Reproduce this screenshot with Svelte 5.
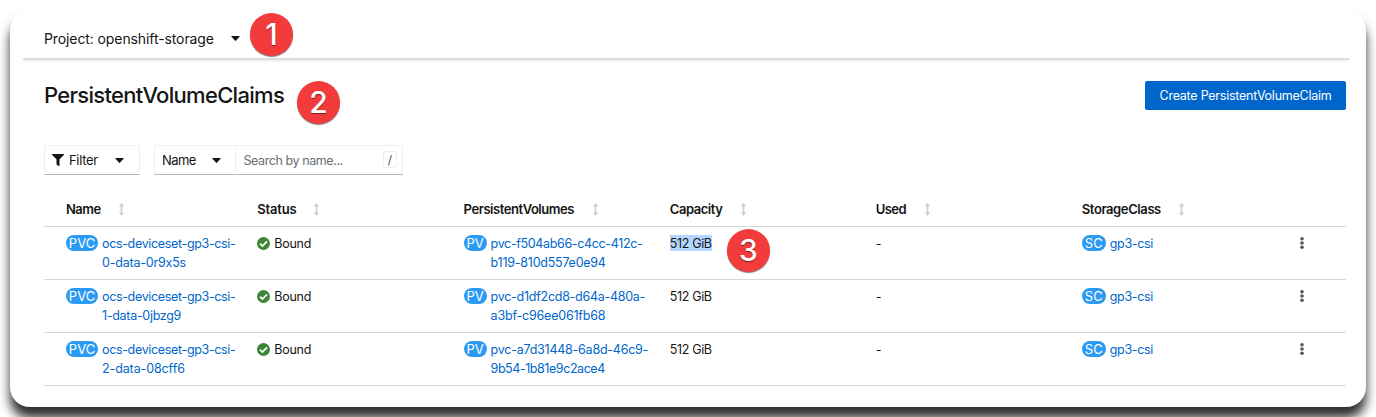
<script>
  const columns = [
    { label: 'Name', gap: 17.5, spacing: -0.55 },
    { label: 'Status', gap: 17, spacing: -0.2 },
    { label: 'PersistentVolumes', gap: 18, spacing: -0.44 },
    { label: 'Capacity', gap: 17.5, spacing: -0.45 },
    { label: 'Used', gap: 18, spacing: -0.6 },
    { label: 'StorageClass', gap: 17, spacing: -0.4 },
  ];
  const rows = [
    {
      name: [['ocs-deviceset-gp3-csi-', -0.34], ['0-data-0r9x5s', -0.2]],
      pv: [['pvc-f504ab66-c4cc-412c-', -0.35], ['b119-810d557e0e94', -0.24]],
      selected: true,
    },
    {
      name: [['ocs-deviceset-gp3-csi-', -0.34], ['1-data-0jbzg9', -0.3]],
      pv: [['pvc-d1df2cd8-d64a-480a-', -0.27], ['a3bf-c96ee061fb68', -0.2]],
    },
    {
      name: [['ocs-deviceset-gp3-csi-', -0.34], ['2-data-08cff6', -0.11]],
      pv: [['pvc-a7d31448-6a8d-46c9-', -0.24], ['9b54-1b81e9c2ace4', -0.44]],
    },
  ];
</script>

{#snippet caret()}
  <svg class="caret" width="9" height="5" viewBox="0 0 9 5"><path d="M.8 0h7.4q.8.1.3.8L5.1 4.6q-.6.6-1.2 0L.5.8Q0 .1.8 0z" fill="#151515" /></svg>
{/snippet}

{#snippet link(lines)}
  <span class="link">{#each lines as [text, spacing]}<span style="letter-spacing: {spacing}px">{text}</span>{/each}</span>
{/snippet}

<div class="page">
  <main class="card">
    <header class="project">
      <span>Project: openshift-storage</span>
      {@render caret()}
    </header>
    <section class="content">
      <div class="heading">
        <h1>PersistentVolumeClaims</h1>
        <button class="create"><span>Create PersistentVolumeClaim</span></button>
      </div>
      <div class="toolbar">
        <div class="control filter">
          <svg width="12" height="12" viewBox="0 0 512 512"><path d="M488 0H24C3 0-8 26 7 41l185 185v206c0 8 4 15 10 20l80 56c16 11 38 0 38-20V226L505 41C520 26 509 0 488 0z" fill="#151515" /></svg>
          <span>Filter</span>
          {@render caret()}
        </div>
        <div class="control kind"><span>Name</span>{@render caret()}</div>
        <div class="control search"><span>Search by name...</span><kbd>/</kbd></div>
      </div>
      <div class="table">
        <div class="row head">
          {#each columns as c}
            <div class="th">
              <span style="letter-spacing: {c.spacing}px">{c.label}</span>
              <svg style="margin-left: {c.gap}px" width="7" height="13" viewBox="0 0 7 13"><path d="M3.5 0 6.4 3.3H4.3v6.2h2.1L3.5 12.8 .6 9.5h2.1V3.3H.6z" fill="#cdcdcd" /></svg>
            </div>
          {/each}
        </div>
        {#each rows as r}
          <div class="row body">
            <div class="resource"><b class="badge pvc">PVC</b>{@render link(r.name)}</div>
            <div class="status">
              <svg width="13" height="13" viewBox="0 0 12 12"><circle cx="6" cy="6" r="6" fill="#3e8635" /><path d="m2.8 6.2 2.2 2.2 4.3-4.3" fill="none" stroke="#fff" stroke-width="1.6" /></svg>
              <span>Bound</span>
            </div>
            <div class="resource"><b class="badge pv">PV</b>{@render link(r.pv)}</div>
            <div><span class="capacity" class:selected={r.selected}>512 GiB</span></div>
            <div class="used">-</div>
            <div class="resource"><b class="badge sc">SC</b>{@render link([['gp3-csi', -0.35]])}</div>
            <div class="kebab"><svg width="4" height="12" viewBox="0 0 4 12"><circle cx="2" cy="1.8" r="1.8" /><circle cx="2" cy="6" r="1.8" /><circle cx="2" cy="10.2" r="1.8" /></svg></div>
          </div>
        {/each}
      </div>
    </section>
  </main>
  <span class="marker one">1</span>
  <span class="marker two">2</span>
  <span class="marker three">3</span>
</div>

<style>
  :global(body) { margin: 0; background: #fff; overflow: hidden; }
  .page { position: relative; box-sizing: border-box; height: 417px; padding: 10px; overflow: hidden; font: 13px/19px Inter, "Liberation Sans", sans-serif; font-feature-settings: "calt" 0; color: #151515; }
  .card { height: 397px; border-radius: 20px; background: #fff; box-shadow: 0 11px 11px rgba(0, 0, 0, .82); overflow: hidden; }
  .project { display: flex; align-items: center; box-sizing: border-box; height: 50px; margin: 0 16px 0 13px; padding: 8px 0 0 21px; border-bottom: 2px solid #dedede; box-shadow: 0 3px 2px -2px rgba(0, 0, 0, .1); font-size: 14px; letter-spacing: -.1px; }
  .project .caret { margin-left: 17px; }
  .caret { flex: none; }
  .content { padding: 0 20px 0 34px; }
  .heading { display: flex; justify-content: space-between; height: 85px; }
  h1 { margin: 21px 0 0; font-size: 22px; line-height: 28px; font-weight: 500; letter-spacing: -.7px; }
  .create { width: 201px; height: 29px; margin-top: 21px; padding: 0; border: 0; border-radius: 2px; background: #06c; color: #fff; font: inherit; font-size: 12.5px; letter-spacing: -.25px; white-space: nowrap; }
  .toolbar { display: flex; height: 30px; }
  .control { display: flex; align-items: center; box-sizing: border-box; height: 30px; border: 1px solid #f0f0f0; border-bottom: 1.5px solid #b5b5b5; }
  .filter { width: 96px; padding-left: 7px; }
  .filter span { width: 30px; margin: 0 15.5px 0 5px; letter-spacing: -.3px; }
  .kind { width: 82px; margin-left: 14px; padding-left: 7px; }
  .kind span { width: 50px; letter-spacing: -.6px; }
  .search { width: 167px; border-left: 0; padding: 0 5px 0 7.5px; justify-content: space-between; color: #6a6e73; font-size: 12.5px; }
  .search span { letter-spacing: -.42px; white-space: nowrap; }
  kbd { box-sizing: border-box; width: 14px; height: 17px; margin-bottom: 1px; border: 1px solid #eee; border-radius: 3px; font: 12px/15px Inter, sans-serif; text-align: center; color: #555; }
  .table { margin-top: 17px; }
  .row { display: grid; grid-template-columns: 191.3px 206.3px 206.2px 206px 206px 218px 1fr; padding-left: 22px; border-bottom: 1px solid #d8d8d8; }
  .head { height: 34px; }
  .th { display: flex; align-items: center; font-weight: 600; }
  .body { box-sizing: border-box; height: 53.1px; padding-top: 7px; font-size: 12.5px; }
  .resource { display: flex; align-items: flex-start; }
  .link { color: #06c; white-space: nowrap; }
  .link span { display: block; }
  .badge { box-sizing: border-box; height: 16px; margin: 1px 4px 0 0; border-radius: 8px; background: #2b9af3; color: #fff; font-size: 13px; font-weight: 400; line-height: 16px; text-align: center; }
  .pvc { width: 32px; } .pv { width: 23px; } .sc { width: 24px; }
  .status { display: flex; height: 19px; align-items: center; gap: 4px; letter-spacing: -.25px; }
  .capacity { display: inline-block; height: 16px; margin-top: 1px; line-height: 17px; letter-spacing: -.35px; }
  .selected { background: #b3d7ff; }
  .kebab svg { display: block; margin-top: 3px; fill: #555; }
  .marker { position: absolute; width: 43px; height: 43px; border-radius: 50%; background: #f43b3c; box-shadow: 0 1px 1px rgba(0, 0, 0, .5); color: #fff; font: 500 30px/42px Inter, sans-serif; text-align: center; text-shadow: 0 1px 1px rgba(0, 0, 0, .5); }
  .one { left: 250px; top: 13px; } .two { left: 297px; top: 81px; } .three { left: 727px; top: 229px; }
</style>
